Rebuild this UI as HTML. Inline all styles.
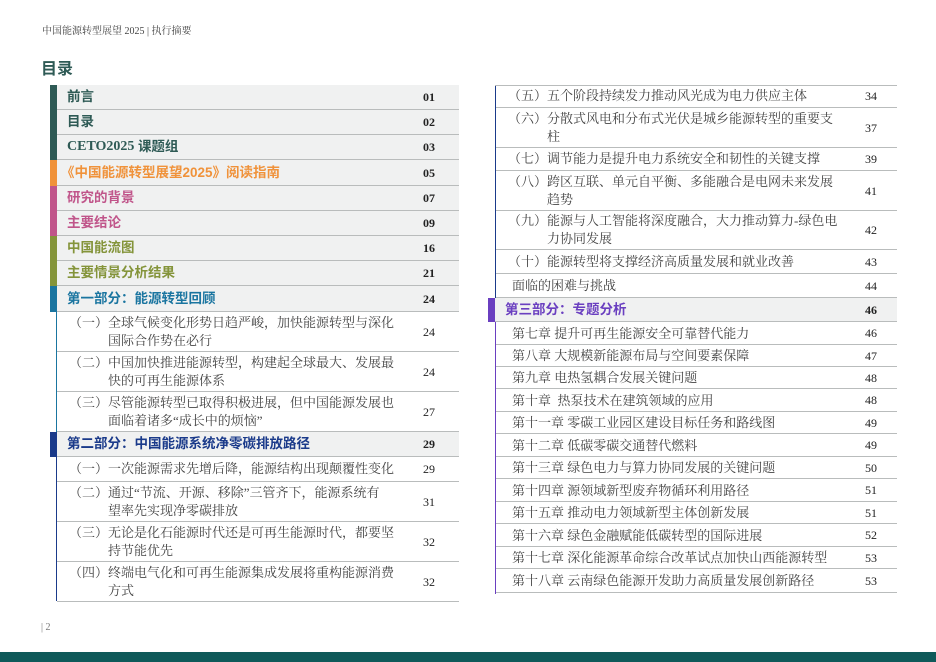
<!DOCTYPE html>
<html><head><meta charset="utf-8"><style>
*{margin:0;padding:0;box-sizing:border-box}
body{width:936px;height:662px;background:#fff;position:relative;overflow:hidden;font-family:"Liberation Serif","Noto Serif CJK SC",serif;color:#333}
.a{position:absolute}
.hd{left:42px;top:22px;font-size:10px;color:#444}
.tt{left:41px;top:55px;font-size:16px;font-weight:bold;color:#2e5a55;font-family:"Liberation Sans","Noto Sans CJK SC",sans-serif}
.r{position:absolute;border-bottom:1px solid #b9bcbc;display:flex;align-items:center;line-height:1}
.g{background:#f0f1f1}
.h{font-family:"Liberation Sans","Noto Sans CJK SC",sans-serif;font-weight:bold;font-size:13.5px}
.s{font-size:13px;color:#444;white-space:nowrap}
.s div{line-height:18px}
.i{padding-left:39px;text-indent:-39px}
.n{position:absolute;font-family:"Liberation Serif",serif;font-size:12px;color:#222;line-height:1}
.nb{font-weight:bold}
.bar{position:absolute;width:7px}
</style></head><body>
<div class="a hd">中国能源转型展望 2025 | 执行摘要</div>
<div class="a tt">目录</div>

<div class="bar" style="left:50px;top:85px;height:75px;background:#2e5a55"></div>
<div class="bar" style="left:50px;top:160px;height:26px;background:#f0923a"></div>
<div class="bar" style="left:50px;top:186px;height:50px;background:#c0558a"></div>
<div class="bar" style="left:50px;top:236px;height:50px;background:#84943a"></div>
<div class="bar" style="left:50px;top:286px;height:26px;background:#1a75a0"></div>
<div class="a" style="left:56px;top:312px;width:1px;height:120px;background:#1a75a0"></div>
<div class="bar" style="left:50px;top:432px;height:25px;background:#1a3a8a"></div>
<div class="a" style="left:56px;top:457px;width:1px;height:144px;background:#1a3a8a"></div>

<div class="r g h" style="left:57px;top:85px;width:402px;height:25px;padding-left:10px;color:#2e5a55">前言<span class="n nb" style="left:366px">01</span></div>
<div class="r g h" style="left:57px;top:110px;width:402px;height:25px;padding-left:10px;color:#2e5a55">目录<span class="n nb" style="left:366px">02</span></div>
<div class="r g h" style="left:57px;top:135px;width:402px;height:25px;padding-left:10px;color:#2e5a55"><span style="font-family:'Liberation Serif';font-size:14px">CETO2025&nbsp;</span>课题组<span class="n nb" style="left:366px">03</span></div>
<div class="r g h" style="left:57px;top:160px;width:402px;height:26px;padding-left:4px;color:#f0923a">《中国能源转型展望2025》阅读指南<span class="n nb" style="left:366px">05</span></div>
<div class="r g h" style="left:57px;top:186px;width:402px;height:25px;padding-left:10px;color:#c0558a">研究的背景<span class="n nb" style="left:366px">07</span></div>
<div class="r g h" style="left:57px;top:211px;width:402px;height:25px;padding-left:10px;color:#c0558a">主要结论<span class="n nb" style="left:366px">09</span></div>
<div class="r g h" style="left:57px;top:236px;width:402px;height:25px;padding-left:10px;color:#84943a">中国能流图<span class="n nb" style="left:366px">16</span></div>
<div class="r g h" style="left:57px;top:261px;width:402px;height:25px;padding-left:10px;color:#84943a">主要情景分析结果<span class="n nb" style="left:366px">21</span></div>
<div class="r g h" style="left:57px;top:286px;width:402px;height:26px;padding-left:10px;color:#1a75a0">第一部分：能源转型回顾<span class="n nb" style="left:366px">24</span></div>

<div class="r s" style="left:57px;top:312px;width:402px;height:40px;padding-left:12px"><div class="i">（一）全球气候变化形势日趋严峻，加快能源转型与深化<br>国际合作势在必行</div><span class="n" style="left:366px">24</span></div>
<div class="r s" style="left:57px;top:352px;width:402px;height:40px;padding-left:12px"><div class="i">（二）中国加快推进能源转型，构建起全球最大、发展最<br>快的可再生能源体系</div><span class="n" style="left:366px">24</span></div>
<div class="r s" style="left:57px;top:392px;width:402px;height:40px;padding-left:12px"><div class="i">（三）尽管能源转型已取得积极进展，但中国能源发展也<br>面临着诸多“成长中的烦恼”</div><span class="n" style="left:366px">27</span></div>
<div class="r g h" style="left:57px;top:432px;width:402px;height:25px;padding-left:10px;color:#1a3a8a">第二部分：中国能源系统净零碳排放路径<span class="n nb" style="left:366px">29</span></div>
<div class="r s" style="left:57px;top:457px;width:402px;height:25px;padding-left:12px"><div>（一）一次能源需求先增后降，能源结构出现颠覆性变化</div><span class="n" style="left:366px">29</span></div>
<div class="r s" style="left:57px;top:482px;width:402px;height:40px;padding-left:12px"><div class="i">（二）通过“节流、开源、移除”三管齐下，能源系统有<br>望率先实现净零碳排放</div><span class="n" style="left:366px">31</span></div>
<div class="r s" style="left:57px;top:522px;width:402px;height:40px;padding-left:12px"><div class="i">（三）无论是化石能源时代还是可再生能源时代，都要坚<br>持节能优先</div><span class="n" style="left:366px">32</span></div>
<div class="r s" style="left:57px;top:562px;width:402px;height:40px;padding-left:12px"><div class="i">（四）终端电气化和可再生能源集成发展将重构能源消费<br>方式</div><span class="n" style="left:366px">32</span></div>

<div class="a" style="left:495px;top:85px;width:1px;height:213px;background:#1a3a8a"></div>
<div class="a" style="left:495px;top:85px;width:402px;height:1px;background:#b9bcbc"></div>
<div class="bar" style="left:488px;top:298px;height:24px;background:#6a3fc0"></div>
<div class="a" style="left:495px;top:322px;width:1px;height:272px;background:#6a3fc0"></div>

<div class="r s" style="left:496px;top:85px;width:401px;height:23px;padding-left:12px"><div>（五）五个阶段持续发力推动风光成为电力供应主体</div><span class="n" style="left:369px">34</span></div>
<div class="r s" style="left:496px;top:108px;width:401px;height:40px;padding-left:12px"><div class="i">（六）分散式风电和分布式光伏是城乡能源转型的重要支<br>柱</div><span class="n" style="left:369px">37</span></div>
<div class="r s" style="left:496px;top:148px;width:401px;height:23px;padding-left:12px"><div>（七）调节能力是提升电力系统安全和韧性的关键支撑</div><span class="n" style="left:369px">39</span></div>
<div class="r s" style="left:496px;top:171px;width:401px;height:40px;padding-left:12px"><div class="i">（八）跨区互联、单元自平衡、多能融合是电网未来发展<br>趋势</div><span class="n" style="left:369px">41</span></div>
<div class="r s" style="left:496px;top:211px;width:401px;height:39px;padding-left:12px"><div class="i">（九）能源与人工智能将深度融合，大力推动算力-绿色电<br>力协同发展</div><span class="n" style="left:369px">42</span></div>
<div class="r s" style="left:496px;top:250px;width:401px;height:24px;padding-left:12px"><div>（十）能源转型将支撑经济高质量发展和就业改善</div><span class="n" style="left:369px">43</span></div>
<div class="r s" style="left:496px;top:274px;width:401px;height:24px;padding-left:16px"><div>面临的困难与挑战</div><span class="n" style="left:369px">44</span></div>
<div class="r g h" style="left:495px;top:298px;width:402px;height:24px;padding-left:10px;color:#6a3fc0">第三部分：专题分析<span class="n nb" style="left:370px">46</span></div>

<div class="r s" style="left:496px;top:322px;width:401px;height:23px;padding-left:16px">第七章 提升可再生能源安全可靠替代能力<span class="n" style="left:369px">46</span></div>
<div class="r s" style="left:496px;top:345px;width:401px;height:22px;padding-left:16px">第八章 大规模新能源布局与空间要素保障<span class="n" style="left:369px">47</span></div>
<div class="r s" style="left:496px;top:367px;width:401px;height:22px;padding-left:16px">第九章 电热氢耦合发展关键问题<span class="n" style="left:369px">48</span></div>
<div class="r s" style="left:496px;top:389px;width:401px;height:23px;padding-left:16px">第十章&nbsp; 热泵技术在建筑领域的应用<span class="n" style="left:369px">48</span></div>
<div class="r s" style="left:496px;top:412px;width:401px;height:22px;padding-left:16px">第十一章 零碳工业园区建设目标任务和路线图<span class="n" style="left:369px">49</span></div>
<div class="r s" style="left:496px;top:434px;width:401px;height:23px;padding-left:16px">第十二章 低碳零碳交通替代燃料<span class="n" style="left:369px">49</span></div>
<div class="r s" style="left:496px;top:457px;width:401px;height:22px;padding-left:16px">第十三章 绿色电力与算力协同发展的关键问题<span class="n" style="left:369px">50</span></div>
<div class="r s" style="left:496px;top:479px;width:401px;height:23px;padding-left:16px">第十四章 源领域新型废弃物循环利用路径<span class="n" style="left:369px">51</span></div>
<div class="r s" style="left:496px;top:502px;width:401px;height:22px;padding-left:16px">第十五章 推动电力领域新型主体创新发展<span class="n" style="left:369px">51</span></div>
<div class="r s" style="left:496px;top:524px;width:401px;height:23px;padding-left:16px">第十六章 绿色金融赋能低碳转型的国际进展<span class="n" style="left:369px">52</span></div>
<div class="r s" style="left:496px;top:547px;width:401px;height:22px;padding-left:16px">第十七章 深化能源革命综合改革试点加快山西能源转型<span class="n" style="left:369px">53</span></div>
<div class="r s" style="left:496px;top:569px;width:401px;height:24px;padding-left:16px">第十八章 云南绿色能源开发助力高质量发展创新路径<span class="n" style="left:369px">53</span></div>

<div class="a" style="left:41px;top:622px;font-size:10px;color:#777">| 2</div>
<div class="a" style="left:0;top:652px;width:936px;height:10px;background:#0f5a5a"></div>
</body></html>
